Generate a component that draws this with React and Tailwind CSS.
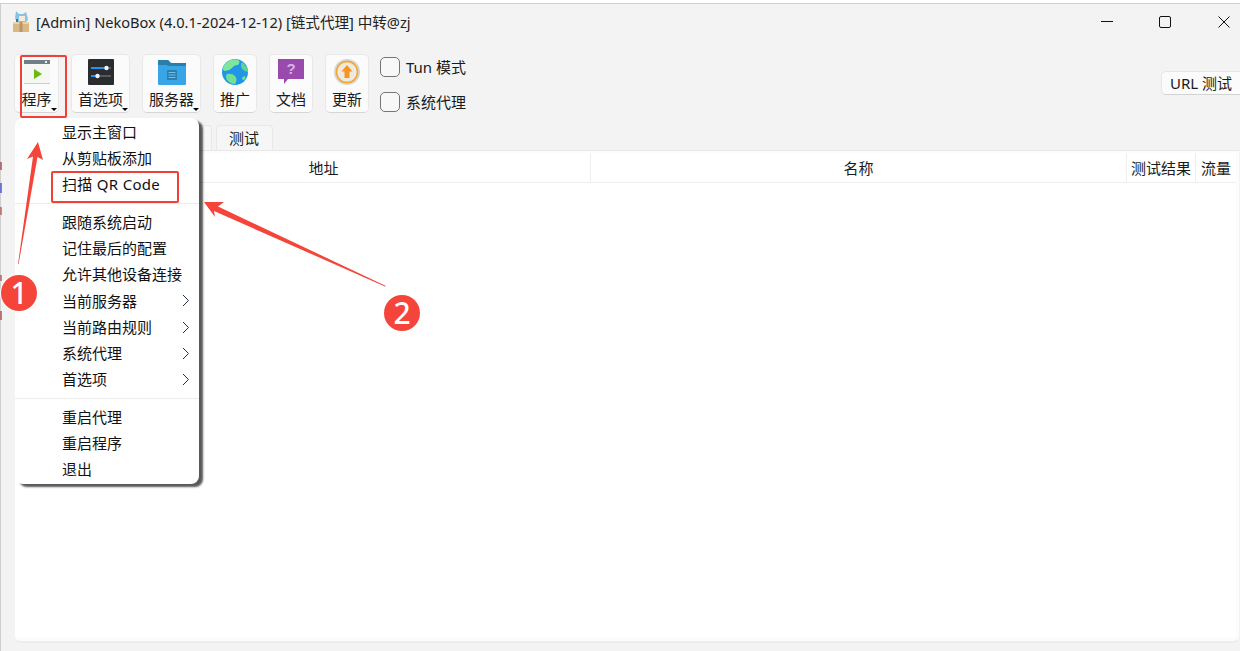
import React from 'react';

const ProgramIcon = () => (
  <svg width="26" height="24" viewBox="0 0 26 24">
    <rect x="0" y="0" width="26" height="24" fill="#f4f7f2" />
    <rect x="0" y="0" width="26" height="4" fill="#6f7f88" />
    <rect x="21" y="1" width="2" height="2" fill="#e8eef0" />
    <path d="M10 9 L18 14 L10 19 Z" fill="#69b90f" />
    <rect x="0" y="23" width="26" height="1" fill="#c9cfc9" />
  </svg>
);

const PrefsIcon = () => (
  <svg width="26" height="26" viewBox="0 0 26 26">
    <rect width="26" height="26" rx="1" fill="#2a2d30" />
    <rect x="3" y="8" width="20" height="2" fill="#55585c" />
    <rect x="3" y="8" width="16" height="2" fill="#2f8fe6" />
    <circle cx="18.5" cy="9" r="2.2" fill="#f1f3f5" />
    <rect x="3" y="16" width="20" height="2" fill="#55585c" />
    <rect x="3" y="16" width="7" height="2" fill="#2f8fe6" />
    <circle cx="9.5" cy="17" r="2.2" fill="#f1f3f5" />
  </svg>
);

const ServerIcon = () => (
  <svg width="28" height="25" viewBox="0 0 28 25">
    <path d="M0 1 Q0 0 1 0 H10 L13 3 H27 Q28 3 28 4 V24 Q28 25 27 25 H1 Q0 25 0 24 Z" fill="#38a6e6" />
    <path d="M0 1 Q0 0 1 0 H10 L13 3 H28 V6 H11 L8 5 H0 Z" fill="#2b7ea8" />
    <rect x="9" y="10" width="10" height="10" rx="1" fill="#2b7fae" />
    <rect x="10.5" y="12" width="7" height="1" fill="#72bde6" />
    <rect x="10.5" y="14.5" width="7" height="1" fill="#72bde6" />
    <rect x="10.5" y="17" width="7" height="1" fill="#72bde6" />
  </svg>
);

const GlobeIcon = () => (
  <svg width="26" height="26" viewBox="0 0 26 26">
    <circle cx="13" cy="13" r="13" fill="#2196e8" />
    <path d="M5 3 Q10 -1 16 1 Q19 3 16 6 Q12 6 10 9 Q7 12 3 12 Q1 12 1 9 Q2 5 5 3 Z" fill="#7ee59c" />
    <path d="M20 3 Q25 7 26 13 Q23 13 20 10 Q18 6 20 3 Z" fill="#5fd38f" />
    <path d="M5 15 Q10 14 13 17 Q16 20 13 25 Q8 25 5 21 Q3 18 5 15 Z" fill="#6fe096" />
    <path d="M22 17 Q24 17 23 20 Q21 22 20 20 Q20 18 22 17 Z" fill="#6fe096" />
  </svg>
);

const DocIcon = () => (
  <svg width="26" height="26" viewBox="0 0 26 26">
    <path d="M0 0 H26 V20 H10 L6 25 V20 H0 Z" fill="#9a49ad" />
    <text x="13" y="15" textAnchor="middle" fontSize="15" fontWeight="700" fill="#d9b3e3" fontFamily="'Liberation Sans', sans-serif">?</text>
  </svg>
);

const UpdateIcon = () => (
  <svg width="26" height="26" viewBox="0 0 26 26">
    <circle cx="13" cy="13" r="13" fill="#d4d4d4" />
    <circle cx="13" cy="13" r="10.5" fill="#efe9e0" stroke="#f5a623" strokeWidth="1.5" />
    <path d="M13 6 L18.5 12.5 H15.5 V19 H10.5 V12.5 H7.5 Z" fill="#f7941d" />
  </svg>
);

const AppLogo = () => (
  <svg width="18" height="21" viewBox="0 0 18 21" className="shrink-0">
    <path d="M4 0 L7 3 H11 L14 1 L16 8 Q15 12 10 12 Q4 12 3 7 Z" fill="#86c4e6" />
    <rect x="7" y="5" width="6" height="5" fill="#f5e8dc" />
    <rect x="1" y="11" width="16" height="10" fill="#d8b884" />
    <rect x="1" y="11" width="16" height="2" fill="#ead3a6" />
    <rect x="7.5" y="11" width="3" height="10" fill="#b9976a" />
    <rect x="4" y="8" width="2" height="3" fill="#4f6f8a" />
  </svg>
);

const toolButtons = [
  { label: '程序', icon: <ProgramIcon />, width: 'w-[45px]', arrow: true },
  { label: '首选项', icon: <PrefsIcon />, width: 'w-[59px]', arrow: true },
  { label: '服务器', icon: <ServerIcon />, width: 'w-[59px]', arrow: true },
  { label: '推广', icon: <GlobeIcon />, width: 'w-[44px]' },
  { label: '文档', icon: <DocIcon />, width: 'w-[44px]' },
  { label: '更新', icon: <UpdateIcon />, width: 'w-[44px]' },
];

const columns = [
  { label: '', width: 'w-[44px]' },
  { label: '地址', width: 'w-[532px] pr-[2px]' },
  { label: '名称', width: 'w-[536px]' },
  { label: '测试结果', width: 'w-[69px]' },
  { label: '流量', width: 'w-[40px]' },
];

const menuGroups = [
  [{ label: '显示主窗口' }, { label: '从剪贴板添加' }, { label: '扫描 QR Code', wide: true }],
  [
    { label: '跟随系统启动' },
    { label: '记住最后的配置' },
    { label: '允许其他设备连接' },
    { label: '当前服务器', sub: true },
    { label: '当前路由规则', sub: true },
    { label: '系统代理', sub: true },
    { label: '首选项', sub: true },
  ],
  [{ label: '重启代理' }, { label: '重启程序' }, { label: '退出' }],
];

// stray bits of the page behind the window, at the far left edge
const specks = [
  { cls: 'top-[162px] h-[8px] bg-[#a8404f]' },
  { cls: 'top-[183px] h-[10px] bg-[#3a4fd8]' },
  { cls: 'top-[207px] h-[8px] bg-[#b05a50]' },
  { cls: 'top-[275px] h-[6px] bg-[#b05a50]' },
  { cls: 'top-[311px] h-[9px] bg-[#b0464a]' },
];

const ToolButton = ({ label, icon, width, arrow }) => (
  <div className={`relative flex h-[59px] flex-col items-center rounded-[5px] border border-[#e8e8e8] border-b-[#d6d6d6] bg-[#fbfbfb] pt-[4px] ${width}`}>
    <div className="flex h-[26px] items-center justify-center">{icon}</div>
    <div className="mt-[4px] whitespace-nowrap text-[15px] leading-[20px] text-[#1a1a1a]">{label}</div>
    {arrow && (
      <div className="absolute right-[1px] bottom-[1px] h-0 w-0 border-x-[3px] border-t-[3px] border-x-transparent border-t-black" />
    )}
  </div>
);

const CheckRow = ({ label }) => (
  <div className="flex h-[20px] items-center gap-[6px]">
    <div className="h-[20px] w-[20px] rounded-[5px] border-[1.5px] border-[#757575] bg-[#f8f8f8]" />
    <span className="whitespace-nowrap text-[15px] leading-[20px] text-[#1a1a1a]">{label}</span>
  </div>
);

const MenuRow = ({ label, sub, wide }) => (
  <div className={`relative flex h-[26.15px] items-center pb-[2px] pl-[47px] text-[15px] leading-[20px] text-[#111] ${wide ? 'tracking-[0.3px]' : ''}`}>
    {label}
    {sub && (
      <svg width="8" height="13" viewBox="0 0 8 13" className="absolute top-[6px] left-[167px]">
        <polyline points="1,1 6.5,6.5 1,12" fill="none" stroke="#24304a" strokeWidth="1" />
      </svg>
    )}
  </div>
);

const ProgramMenu = () => (
  <div className="absolute top-[118px] left-[15px] w-[184px] rounded-[8px] bg-white pt-[1.6px] pb-[0.4px] shadow-[4px_3px_2px_rgba(0,0,0,0.65)]">
    {menuGroups.map((group, i) => (
      <div key={i}>
        {i > 0 && (
          <div className="flex h-[12px] items-start pt-[5px]">
            <div className="h-px w-full bg-[#ececec]" />
          </div>
        )}
        {group.map((item) => (
          <MenuRow key={item.label} {...item} />
        ))}
      </div>
    ))}
  </div>
);

const Badge = ({ n, cls }) => (
  <div className={`absolute flex h-[36px] w-[36px] items-center justify-center rounded-full bg-[#f5443a] text-[30px] leading-none font-medium text-white ring-1 ring-white ${cls}`}>
    {n}
  </div>
);

export default function App() {
  return (
    <div className="relative h-[651px] w-[1240px] overflow-hidden bg-white font-['Noto_Sans','Noto_Sans_CJK_SC',sans-serif]">
      {specks.map((s, i) => (
        <div key={i} className={`absolute left-0 z-10 w-[2px] opacity-70 ${s.cls}`} />
      ))}

      <div className="mt-[3px] flex h-[648px] flex-col border-t border-l border-[#cfcfcf] bg-[#f3f3f3]">
        {/* title bar */}
        <div className="flex h-[37px] items-center pb-[2px] pl-[11px]">
          <AppLogo />
          <span className="ml-[6px] whitespace-nowrap text-[14.6px] leading-[20px] text-[#222]">
            [Admin] NekoBox (4.0.1-2024-12-12) [链式代理] 中转@zj
          </span>
          <div className="ml-auto flex items-center pr-[10px]">
            <svg width="12" height="12" viewBox="0 0 12 12" className="mr-[46px]">
              <line x1="0" y1="5.5" x2="12" y2="5.5" stroke="#111" strokeWidth="1" />
            </svg>
            <svg width="12" height="12" viewBox="0 0 12 12" className="mr-[47px]">
              <rect x="0.5" y="0.5" width="11" height="11" rx="1.5" fill="none" stroke="#111" strokeWidth="1" />
            </svg>
            <svg width="12" height="12" viewBox="0 0 12 12">
              <path d="M0.5 0.5 L11.5 11.5 M11.5 0.5 L0.5 11.5" stroke="#111" strokeWidth="1" />
            </svg>
          </div>
        </div>

        {/* toolbar */}
        <div className="mt-[13px] flex items-start pl-[13px]">
          <div className="flex gap-3">
            {toolButtons.map((b) => (
              <ToolButton key={b.label} {...b} />
            ))}
          </div>
          <div className="mt-[3px] ml-[11px] flex flex-col gap-[15px]">
            <CheckRow label="Tun 模式" />
            <CheckRow label="系统代理" />
          </div>
          <div className="mt-[17px] ml-auto flex h-[24px] w-[79px] items-center justify-center rounded-l-[5px] border border-r-0 border-[#e6e6e6] border-b-[#d2d2d2] bg-[#fbfbfb] pb-[1px] text-[15px] leading-[20px] whitespace-nowrap text-[#1a1a1a]">
            URL 测试
          </div>
        </div>

        {/* tabs */}
        <div className="mt-[12px] flex h-[25px] gap-[4px] pl-[15px]">
          <div className="w-[196px] rounded-t-[4px] border border-b-0 border-[#e8e8e8] bg-[#f6f6f6]" />
          <div className="flex w-[57px] items-center justify-center rounded-t-[4px] border border-b-0 border-[#e8e8e8] bg-[#f6f6f6] pr-[1px] text-[15px] leading-[20px] text-[#1a1a1a]">
            测试
          </div>
        </div>

        {/* server table */}
        <div className="mr-[1px] mb-[8px] ml-[14px] flex flex-1 flex-col rounded-b-[6px] border-t border-[#e8e8e8] border-b-2 border-b-[#ececec] bg-[#fcfcfc] pt-[2px] pr-[3px]">
          <div className="flex h-[30px] border-b border-[#efefef] bg-white">
            {columns.map((c, i) => (
              <div
                key={i}
                className={`flex items-center justify-center text-[15px] leading-[20px] whitespace-nowrap text-[#1a1a1a] ${c.width} ${i < columns.length - 1 ? 'border-r border-[#eeeeee]' : ''}`}
              >
                {c.label}
              </div>
            ))}
          </div>
          <div className="mb-[4px] flex-1 rounded-br-[4px] bg-white" />
        </div>
      </div>

      <ProgramMenu />

      {/* red annotations over the screenshot */}
      <div className="absolute top-[55px] left-[20px] h-[63px] w-[47px] rounded-[2px] border-[2.5px] border-[#ef4136]" />
      <div className="absolute top-[171px] left-[51px] h-[32px] w-[128px] rounded-[2px] border-2 border-[#ef4136]" />
      <svg width="1240" height="651" viewBox="0 0 1240 651" className="pointer-events-none absolute top-0 left-0">
        <polygon points="38,142 43,160 37.5,157 18.6,264 18,264 33,156.5 27,159" fill="#f5443a" />
        <polygon points="204,202 224,202 218,206.5 386,286 385,286.5 214,211 215,217" fill="#f5443a" />
      </svg>
      <Badge n="1" cls="top-[275px] left-[1px]" />
      <Badge n="2" cls="top-[295px] left-[384px]" />
    </div>
  );
}
